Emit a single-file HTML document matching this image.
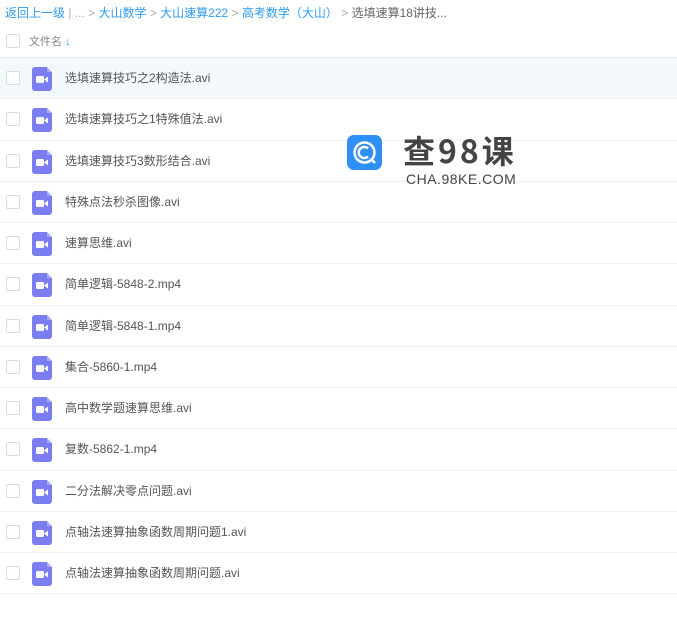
<!DOCTYPE html>
<html><head><meta charset="utf-8"><style>
body{margin:0;width:677px;height:600px;overflow:hidden;background:#fff;font-family:"Liberation Sans","Noto Sans CJK SC",sans-serif;position:relative}
.bc{position:absolute;left:5px;top:4px;font-size:12px;color:#2d9cf0;white-space:nowrap}
.bc .g{color:#aaa}.bc .d{color:#666}
.hd{position:absolute;left:0;top:24px;width:677px;height:33px}
.cb{position:absolute;left:6px;width:12px;height:12px;border:1px solid #dcdcdc;border-radius:2px;background:#fff}
.hd .t{position:absolute;left:29px;top:9px;font-size:11px;color:#888}
.row{position:absolute;left:0;width:677px;height:41px;border-top:1px solid #f0f0f5}
.row .ic{position:absolute;left:32px;top:9px;width:20px;height:24px;background:#7b7ef0;border-radius:3px}
.row .ic:after{content:"";position:absolute;right:0;top:0;border-style:solid;border-width:0 5px 5px 0;border-color:#fff #fff #a7a9f6 #a7a9f6;border-radius:0 3px 0 0}
.row .n{position:absolute;left:65px;top:11px;font-size:12px;color:#555}
</style></head><body>
<div class="bc">返回上一级 <span class="g">| ... &gt;</span> 大山数学 <span class="g">&gt;</span> 大山速算222 <span class="g">&gt;</span> 高考数学（大山） <span class="g">&gt;</span> <span class="d">选填速算18讲技...</span></div>
<div class="hd"><div class="cb" style="top:10px"></div><div class="t">文件名 <span style="color:#09aaff;font-weight:bold">↓</span></div></div>
<div id="rows"></div>
<div style="position:absolute;left:347px;top:135px;width:35px;height:35px;border-radius:7px;background:#2f8ff5">
<svg width="35" height="35" viewBox="0 0 35 35"><circle cx="17.5" cy="17.5" r="10" fill="none" stroke="#fff" stroke-width="2.5"/><path d="M21 13.5a5.5 5.5 0 1 0 0 8" fill="none" stroke="#fff" stroke-width="2.5"/><path d="M24 24l4 4" stroke="#fff" stroke-width="2.5"/></svg></div>
<div style="position:absolute;left:403px;top:130px;font-size:32px;font-weight:bold;color:#444;letter-spacing:3px;font-family:'Noto Sans CJK SC',sans-serif;line-height:40px">查98课</div>
<div style="position:absolute;left:406px;top:171px;font-size:14px;color:#444;letter-spacing:0.5px">CHA.98KE.COM</div>
<script>
var n=["选填速算技巧之2构造法.avi","选填速算技巧之1特殊值法.avi","选填速算技巧3数形结合.avi","特殊点法秒杀图像.avi","速算思维.avi","简单逻辑-5848-2.mp4","简单逻辑-5848-1.mp4","集合-5860-1.mp4","高中数学题速算思维.avi","复数-5862-1.mp4","二分法解决零点问题.avi","点轴法速算抽象函数周期问题1.avi","点轴法速算抽象函数周期问题.avi"];
var h="";n.forEach(function(s,i){var y=57+i*41.25;h+='<div class="row" style="top:'+y+'px;'+(i==0?'background:#f3f8fc;border-top-color:#dde9f4;border-bottom:1px solid #dde9f4;height:40px':'')+'"><div class="cb" style="top:13px"></div><div class="ic"><svg width="20" height="24" style="position:absolute;left:0;top:0"><rect x="4" y="9" width="8" height="7" rx="1.5" fill="#fff"/><path d="M12 12.5l4-3v6z" fill="#fff"/></svg></div><div class="n">'+s+'</div></div>'});
h+='<div class="row" style="top:593px"></div>';
document.getElementById("rows").innerHTML=h;
</script>
</body></html>
